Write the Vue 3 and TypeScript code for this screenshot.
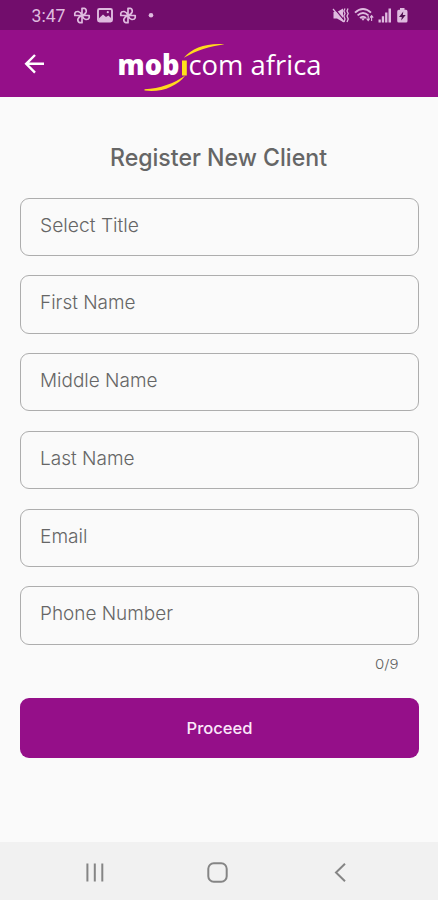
<script setup lang="ts">
interface Field {
  label: string
  width: number
}

// width: rendered length of the label, in pixels
const fields: Field[] = [
  { label: 'Select Title', width: 99 },
  { label: 'First Name', width: 95.5 },
  { label: 'Middle Name', width: 117.5 },
  { label: 'Last Name', width: 94.5 },
  { label: 'Email', width: 47.5 },
  { label: 'Phone Number', width: 133 },
]
</script>

<template>
  <div class="screen">
    <div class="status">
      <svg width="438" height="30" viewBox="0 0 438 30">
        <defs>
          <g id="pinwheel" fill="none" stroke="#dfbbdf" stroke-width="1.7" stroke-linejoin="round">
            <path d="M0 0V-7.2H2.2Q4.6 -6.6 4.2 -3.8Q3.6 -1.4 0 0H7.2V2.2Q6.6 4.2 3.8 4Q1.4 3.4 0 0V7.2H-2.2Q-4.4 6.6 -4.2 3.8Q-3.4 1.4 0 0H-7.2V-2.2Q-6.6 -4.2 -3.8 -4Q-1.4 -3.4 0 0Z" />
          </g>
        </defs>
        <text class="clock" x="31.5" y="22" textLength="34" lengthAdjust="spacingAndGlyphs">3:47</text>
        <use href="#pinwheel" x="82" y="15.5" />
        <rect x="98" y="9" width="14" height="12.6" rx="1.5" fill="none" stroke="#dfbbdf" stroke-width="1.9" />
        <path d="M99 18.2L103 14.4L106 17L108.4 15.4L111.5 18.4V21H99Z" fill="#dfbbdf" />
        <circle cx="107.8" cy="12.2" r="1.1" fill="#dfbbdf" />
        <use href="#pinwheel" x="128" y="15.5" />
        <circle cx="151" cy="15.2" r="2.3" fill="#dfbbdf" />
        <g fill="#dfbbdf">
          <path d="M333.5 12H337L343 8.5V22L337 18.5H333.5Z" />
          <path d="M334 8L345 21.5" stroke="#720d6c" stroke-width="1.3" />
          <path d="M333 9L344 22" stroke="#dfbbdf" stroke-width="1.2" />
          <path d="M345 8.5L343.8 11L345 13.5L343.8 16L345 19L344 22M348 8.5L347 11L348.2 13.5L347 16L348.2 19L347 22" fill="none" stroke="#dfbbdf" stroke-width="1.3" />
          <path d="M355 12.6Q363 5.2 371 12.6M357.6 15.4Q363 10.4 368.4 15.4M360 18Q363 15.4 366 18" fill="none" stroke="#dfbbdf" stroke-width="1.9" />
          <path d="M361 18.2H365L363 20.8Z" />
          <path d="M368.2 15.5V20M366.5 18.5L368.2 20.6L369.8 18.5M371.6 21V16M370 17.7L371.6 15.7L373.2 17.7" fill="none" stroke="#dfbbdf" stroke-width="1.1" />
          <path d="M378.5 19.5H380.8V22.5H378.5ZM381.8 16.2H384.1V22.5H381.8ZM385.1 12.5H387.4V22.5H385.1ZM388.5 8.5H391V22.5H388.5Z" />
          <path d="M400 8H404.5V9.8H406Q407.5 9.8 407.5 11.4V21Q407.5 22.6 406 22.6H398.7Q397.2 22.6 397.2 21V11.4Q397.2 9.8 398.7 9.8H400Z" />
          <path d="M403.3 11.4L399 16.9H401.8L401.2 20.6L405.7 15H402.8Z" fill="#501050" />
        </g>
      </svg>
    </div>
    <header class="bar">
      <svg width="438" height="67" viewBox="0 30 438 67">
        <path d="M44 63.8H26.8M35 55L26.2 63.8L35 72.6" fill="none" stroke="#fff" stroke-width="2.4" />
        <text class="brand bold" x="117.5" y="75.3" textLength="62" lengthAdjust="spacingAndGlyphs">mob</text>
        <rect x="182" y="60.5" width="4.8" height="15" fill="#ffe11a" />
        <text class="brand" x="188.5" y="75.3" textLength="133" lengthAdjust="spacingAndGlyphs">com africa</text>
        <path d="M183.8 57.8C192 48 207 42.8 224.5 44.3C209 46.5 197 50.5 183.8 57.8Z" fill="#ffd91e" />
        <path d="M144.5 89.2C160 88.6 174 83.5 185.3 75.5C177 86.5 161 93 144.5 90.6Z" fill="#ffd91e" />
      </svg>
    </header>
    <main class="content">
      <h1>
        <svg width="220" height="34"><text x="1" y="25" textLength="217" lengthAdjust="spacingAndGlyphs">Register New Client</text></svg>
      </h1>
      <div class="fields">
        <div v-for="field in fields" :key="field.label" class="field">
          <svg width="360" height="28">
            <text x="0" y="20" :textLength="field.width" lengthAdjust="spacingAndGlyphs">{{ field.label }}</text>
          </svg>
        </div>
      </div>
      <div class="counter">
        <svg width="24" height="20"><text x="0" y="14.5" textLength="23.5" lengthAdjust="spacingAndGlyphs">0/9</text></svg>
      </div>
      <button class="proceed" type="button">
        <svg width="67" height="24"><text x="0.5" y="17.5" textLength="66" lengthAdjust="spacingAndGlyphs">Proceed</text></svg>
      </button>
    </main>
    <nav class="nav">
      <svg width="438" height="58" viewBox="0 842 438 58" fill="none" stroke="#858585" stroke-width="2">
        <path d="M87.4 863.5V881.5M94.8 863.5V881.5M102.3 863.5V881.5" />
        <rect x="208.3" y="863.3" width="18.4" height="18.4" rx="5.5" />
        <path d="M345 863.8L336 872.5L345 881.2" />
      </svg>
    </nav>
  </div>
</template>

<style>
body {
  margin: 0;
  background: #fafafa;
}
</style>

<style scoped>
.screen {
  width: 438px;
  height: 900px;
  display: flex;
  flex-direction: column;
  overflow: hidden;
  background: #fafafa;
  font-family: Inter, Roboto, sans-serif;
}
svg {
  display: block;
}
.status {
  height: 30px;
  background: #720d6c;
}
.clock {
  font: 400 18.5px Roboto, sans-serif;
  fill: #dfbbdf;
}
.bar {
  height: 67px;
  background: #950f89;
}
.brand {
  font: 400 28px 'Open Sans', 'Noto Sans', sans-serif;
  fill: #fff;
}
.brand.bold {
  font-weight: 800;
}
.content {
  flex: 1;
  display: flex;
  flex-direction: column;
  padding: 0 19.5px 0 20px;
}
h1 {
  margin: 44px 0 22.5px;
  display: flex;
  justify-content: center;
  font-size: 24px;
  font-weight: 500;
}
h1 text {
  fill: #666;
}
.fields {
  display: flex;
  flex-direction: column;
  gap: 19.4px;
}
.field {
  height: 58.4px;
  box-sizing: border-box;
  padding: 13px 0 0 18.5px;
  border: 1px solid #adadad;
  border-radius: 9px;
  font-size: 19px;
  font-weight: 300;
}
.field text {
  fill: #666;
}
.counter {
  height: 53.6px;
  box-sizing: border-box;
  padding: 9.5px 20px 0 0;
  display: flex;
  justify-content: flex-end;
  font-size: 13.5px;
  font-weight: 300;
}
.counter text {
  fill: #606060;
}
.proceed {
  height: 60px;
  padding: 0;
  border: 0;
  border-radius: 9px;
  background: #950f89;
  display: flex;
  align-items: center;
  justify-content: center;
  font-family: inherit;
  font-size: 16.5px;
  font-weight: 500;
}
.proceed text {
  fill: #fbe8fa;
}
.nav {
  height: 58px;
  background: #f1f1f1;
}
</style>
